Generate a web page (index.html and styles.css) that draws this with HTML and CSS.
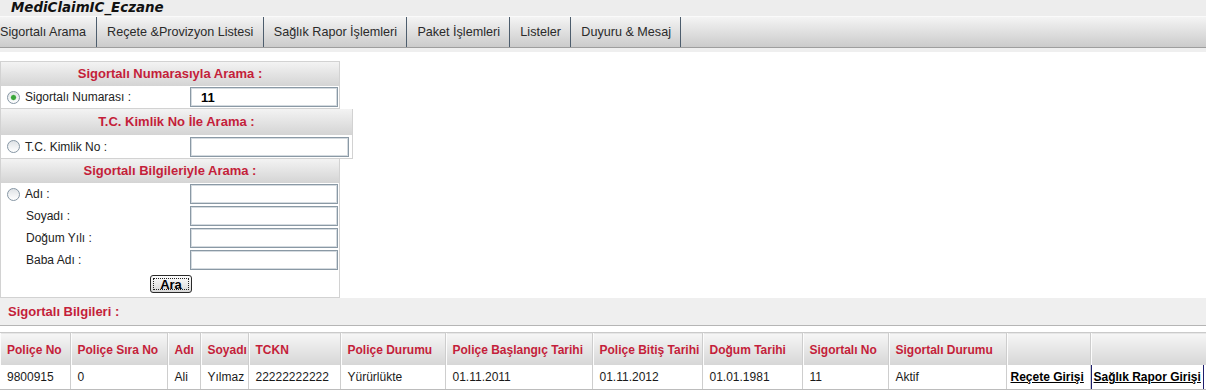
FILE: index.html
```html
<!DOCTYPE html>
<html lang="tr">
<head>
    <meta charset="UTF-8">
    <title>MediClaimIC_Eczane</title>
    <link rel="stylesheet" href="styles.css">
</head>
<body>

<div class="title-bar">
    <span class="app-title">MediClaimIC_Eczane</span>
</div>

<div class="nav">
    <ul class="menu">
        <li class="menu-item">Sigortalı Arama</li>
        <li class="menu-item">Reçete &amp;Provizyon Listesi</li>
        <li class="menu-item">Sağlık Rapor İşlemleri</li>
        <li class="menu-item">Paket İşlemleri</li>
        <li class="menu-item">Listeler</li>
        <li class="menu-item">Duyuru &amp; Mesaj</li>
    </ul>
</div>

<div class="search-panel">
    <!-- Sigortalı numarası ile arama -->
    <div class="search-box">
        <div class="box-head">Sigortalı Numarasıyla Arama :</div>
        <div class="field-row">
            <label class="field-label"><input type="radio" name="searchType" class="radio" checked>Sigortalı Numarası :</label>
            <input type="text" class="text-input value-bold" value="11">
        </div>
    </div>

    <!-- TC kimlik no ile arama -->
    <div class="search-box wide">
        <div class="box-head">T.C. Kimlik No İle Arama :</div>
        <div class="field-row tall">
            <label class="field-label"><input type="radio" name="searchType" class="radio">T.C. Kimlik No :</label>
            <input type="text" class="text-input wide-input">
        </div>
    </div>

    <!-- Sigortalı bilgileri ile arama -->
    <div class="search-box">
        <div class="box-head">Sigortalı Bilgileriyle Arama :</div>
        <div class="field-row">
            <label class="field-label"><input type="radio" name="searchType" class="radio">Adı :</label>
            <input type="text" class="text-input">
        </div>
        <div class="field-row">
            <label class="field-label indent">Soyadı :</label>
            <input type="text" class="text-input">
        </div>
        <div class="field-row">
            <label class="field-label indent">Doğum Yılı :</label>
            <input type="text" class="text-input">
        </div>
        <div class="field-row">
            <label class="field-label indent">Baba Adı :</label>
            <input type="text" class="text-input">
        </div>
        <div class="button-row">
            <button class="search-btn">Ara</button>
        </div>
    </div>
</div>

<div class="results-title">Sigortalı Bilgileri :</div>

<table class="results-table">
    <colgroup>
        <col class="w70"><col class="w97"><col class="w33"><col class="w48"><col class="w92">
        <col class="w105"><col class="w147"><col class="w110"><col class="w100"><col class="w86">
        <col class="w118"><col class="w84"><col class="w116">
    </colgroup>
    <thead>
        <tr>
            <th>Poliçe No</th>
            <th>Poliçe Sıra No</th>
            <th>Adı</th>
            <th>Soyadı</th>
            <th>TCKN</th>
            <th>Poliçe Durumu</th>
            <th>Poliçe Başlangıç Tarihi</th>
            <th>Poliçe Bitiş Tarihi</th>
            <th>Doğum Tarihi</th>
            <th>Sigortalı No</th>
            <th>Sigortalı Durumu</th>
            <th></th>
            <th></th>
        </tr>
    </thead>
    <tbody>
        <tr>
            <td>9800915</td>
            <td>0</td>
            <td>Ali</td>
            <td>Yılmaz</td>
            <td>22222222222</td>
            <td>Yürürlükte</td>
            <td>01.11.2011</td>
            <td>01.11.2012</td>
            <td>01.01.1981</td>
            <td>11</td>
            <td>Aktif</td>
            <td class="link-cell"><a href="#" class="row-link">Reçete Girişi</a></td>
            <td class="link-cell last"><a href="#" class="row-link focused">Sağlık Rapor Girişi</a></td>
        </tr>
    </tbody>
</table>

</body>
</html>
```

FILE: styles.css
```css
body {
    margin: 0;
    font-family: "Liberation Sans", Arial, sans-serif;
    font-size: 12px;
    color: #1a1a1a;
    background-color: #fff;
}

/* Üst başlık */
.title-bar {
    height: 16px;
    padding-left: 11px;
    background-color: #ededed;
}

.app-title {
    font-family: "DejaVu Sans", Verdana, sans-serif;
    font-size: 13.4px;
    font-weight: bold;
    font-style: italic;
    line-height: 16px;
    color: #111;
}

/* Menü */
.nav {
    background-color: #efefef;
    padding-bottom: 4px;
}

.menu {
    display: flex;
    margin: 0;
    padding: 0;
    list-style: none;
    height: 30px;
    border-top: 1px solid #fafafa;
    border-bottom: 1px solid #9e9e9e;
    background: linear-gradient(to bottom, #f4f4f4, #cbcbcb);
}

.menu-item {
    padding: 0 9.4px 0 10px;
    font-size: 12.6px;
    line-height: 30px;
    color: #2a2a2a;
    border-right: 1px solid #4d5d6d;
    white-space: nowrap;
}

.menu-item:first-child {
    padding-left: 0;
    padding-right: 10px;
}

/* Arama kutuları */
.search-panel {
    margin-top: 9px;
}

.search-box {
    width: 338px;
    border: 1px solid #d2d2d2;
}

.search-box.wide {
    width: 351px;
}

.search-box + .search-box {
    border-top: 0;
}

.box-head {
    height: 24px;
    line-height: 24px;
    text-align: center;
    font-size: 13px;
    font-weight: bold;
    color: #c41e3a;
    background: linear-gradient(to bottom, #f3f3f3, #d4d4d4);
}

.wide .box-head {
    height: 26px;
    line-height: 26px;
}

.field-row {
    display: flex;
    align-items: center;
    height: 22px;
}

.field-row.tall {
    height: 23px;
}

.field-label {
    display: flex;
    align-items: center;
    box-sizing: border-box;
    width: 189px;
    padding-left: 6px;
    color: #222;
}

.field-label.indent {
    padding-left: 25px;
}

.radio {
    appearance: none;
    -webkit-appearance: none;
    width: 13px;
    height: 13px;
    margin: 0 5px 0 0;
    border: 1px solid #8696a4;
    border-radius: 50%;
    background: linear-gradient(to bottom, #dfe3e6, #ffffff);
}

.radio:checked {
    background: radial-gradient(circle, #3aa53a 0 2px, #8fd08f 2.6px, transparent 3.2px), linear-gradient(to bottom, #dfe3e6, #ffffff);
}

.text-input {
    box-sizing: border-box;
    width: 148px;
    height: 20px;
    margin: 0;
    padding: 0 0 0 10px;
    border: 1px solid #8a99a5;
    box-shadow: inset 0 0 0 1px #d5dbe0;
    font-family: "Liberation Sans", Arial, sans-serif;
    font-size: 13px;
    background-color: #fff;
}

.text-input.wide-input {
    width: 159px;
}

.value-bold {
    font-weight: bold;
    color: #000;
}

.button-row {
    display: flex;
    justify-content: center;
    height: 26px;
    padding: 4px 0 0 2px;
    box-sizing: border-box;
}

.search-btn {
    width: 42px;
    height: 18px;
    padding: 0;
    font-family: "Liberation Sans", Arial, sans-serif;
    font-size: 13px;
    font-weight: bold;
    color: #000;
    border: 1px solid #2a2a2a;
    border-radius: 3px;
    background: linear-gradient(to bottom, #fdfdfd, #d9d9d9);
    outline: 1px dotted #222;
    outline-offset: -4px;
}

/* Sonuç tablosu */
.results-title {
    height: 27px;
    line-height: 27px;
    padding-left: 8px;
    font-size: 13px;
    font-weight: bold;
    color: #c41e3a;
    background-color: #efefef;
    border-bottom: 1px solid #b5b5b5;
}

.results-table {
    width: 100%;
    margin-top: 6px;
    border-collapse: collapse;
    table-layout: fixed;
}

.w70 { width: 70px; }
.w97 { width: 97px; }
.w33 { width: 33px; }
.w48 { width: 48px; }
.w92 { width: 92px; }
.w105 { width: 105px; }
.w147 { width: 147px; }
.w110 { width: 110px; }
.w100 { width: 100px; }
.w86 { width: 86px; }
.w118 { width: 118px; }
.w84 { width: 84px; }
.w116 { width: 116px; }

.results-table th {
    height: 30px;
    padding: 2px 7px 0;
    text-align: left;
    font-size: 12px;
    font-weight: bold;
    color: #c41e3a;
    white-space: nowrap;
    background: linear-gradient(to bottom, #f6f6f6, #d6d6d6);
    border-top: 1px solid #cacaca;
    border-right: 1px solid #cdcdcd;
    box-shadow: inset 1px 0 0 #fcfcfc;
}

.results-table td {
    height: 24px;
    padding: 0 7px;
    font-size: 12px;
    color: #1a1a1a;
    white-space: nowrap;
    border-right: 1px solid #cecece;
    border-bottom: 1px solid #bcbcbc;
}

.results-table td.link-cell {
    padding: 0 4px;
}

.results-table td.last {
    padding: 0 1px;
    border-right: 0;
    overflow: hidden;
}

.row-link {
    font-weight: bold;
    color: #000;
    text-decoration: underline;
}

.row-link.focused {
    display: inline-block;
    padding: 5px 2px 5px 2px;
    outline: 1px solid #1e1e6e;
}
```
